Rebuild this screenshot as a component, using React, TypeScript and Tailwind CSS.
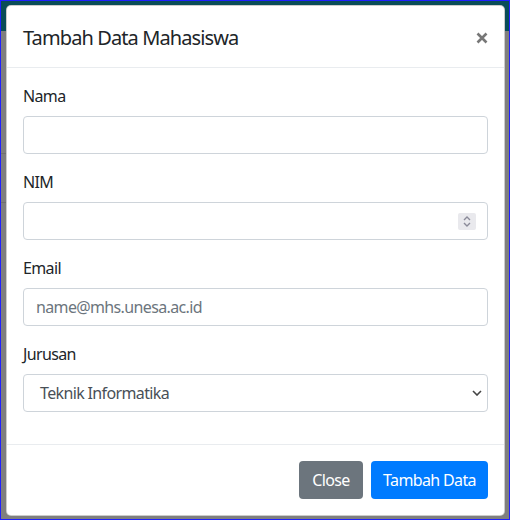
import React from "react";

function Field({ label, children }: { label: string; children: React.ReactNode }) {
  return (
    <div className="mb-4">
      <div className="mb-2 text-[16px] leading-6 text-[#212529]">{label}</div>
      {children}
    </div>
  );
}

const boxCls = "h-[38px] w-full border border-[#ced4da] rounded-[4px] bg-white flex items-center";

export default function App() {
  return (
    <div
      className="relative w-[510px] h-[520px] overflow-hidden border border-[#1f1fff] bg-[#7f7f7f] tracking-[-0.04em]"
      style={{ fontFamily: '"Noto Sans", "Open Sans", sans-serif' }}
    >
      {/* page behind the backdrop */}
      <div className="h-[30px] bg-[#0a4d58]" />
      <div className="mt-[122px] h-px w-[6px] bg-[#707070]" />
      <div className="mt-[48px] h-px w-[6px] bg-[#707070]" />

      {/* modal */}
      <div className="absolute left-[5px] top-[4px] w-[499px] bg-white border border-black/20 rounded-[5px]">
        <div className="flex items-center justify-between px-4 h-[62px] border-b border-[#e9ecef]">
          <h5 className="pt-[2px] text-[20px] leading-[30px] text-[#212529] tracking-[-0.045em]">Tambah Data Mahasiswa</h5>
          <svg width="12" height="12" viewBox="0 0 12 12" className="mt-[2px]">
            <path d="M1.5 1.5 L10.5 10.5 M10.5 1.5 L1.5 10.5" stroke="#777" strokeWidth="2.6" />
          </svg>
        </div>

        <div className="p-4">
          <Field label="Nama">
            <div className={boxCls} />
          </Field>
          <Field label="NIM">
            <div className={boxCls + " justify-end pr-[11px]"}>
              <div className="w-[18px] h-[17px] bg-[#e9e9ed] rounded-[2px] flex items-center justify-center">
                <svg width="10" height="13" viewBox="0 0 10 13">
                  <path d="M2 5 L5 2 L8 5 M2 8 L5 11 L8 8" stroke="#8a8a99" strokeWidth="1.4" fill="none" />
                </svg>
              </div>
            </div>
          </Field>
          <Field label="Email">
            <div className={boxCls + " px-3 text-[16px] text-[#6c757d]"}>name@mhs.unesa.ac.id</div>
          </Field>
          <Field label="Jurusan">
            <div className={boxCls + " justify-between pl-4 pr-[5px] text-[16px] text-[#495057]"}>
              <span>Teknik Informatika</span>
              <svg width="10" height="6" viewBox="0 0 10 6">
                <path d="M1 1 L5 5 L9 1" stroke="#444" strokeWidth="1.6" fill="none" />
              </svg>
            </div>
          </Field>
        </div>

        <div className="flex justify-end items-center p-3 border-t border-[#e9ecef]">
          <button className="m-1 h-[38px] w-[64px] rounded-[4px] bg-[#6c757d] text-white text-[16px]">Close</button>
          <button className="m-1 h-[38px] w-[117px] rounded-[4px] bg-[#007bff] text-white text-[16px]">Tambah Data</button>
        </div>
      </div>
    </div>
  );
}
